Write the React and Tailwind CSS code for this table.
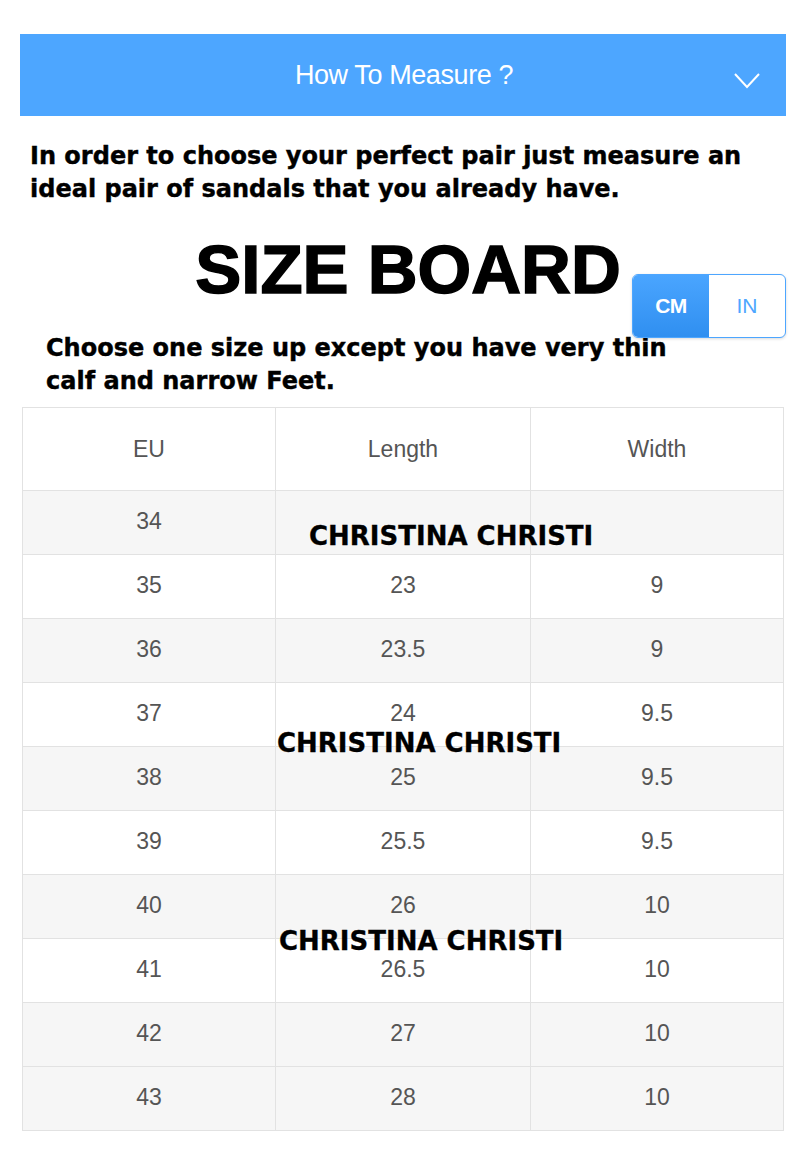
import React, { useState } from 'react';

const rows = [
  { eu: '34', len: '', w: '' },
  { eu: '35', len: '23', w: '9' },
  { eu: '36', len: '23.5', w: '9' },
  { eu: '37', len: '24', w: '9.5' },
  { eu: '38', len: '25', w: '9.5' },
  { eu: '39', len: '25.5', w: '9.5' },
  { eu: '40', len: '26', w: '10' },
  { eu: '41', len: '26.5', w: '10' },
  { eu: '42', len: '27', w: '10' },
  { eu: '43', len: '28', w: '10' },
];

const heavy = "font-['DejaVu_Sans',sans-serif] font-bold text-black [-webkit-text-stroke:0.4px_black]";
const cellFont = "font-['Liberation_Sans',Arial,sans-serif] text-[#555] text-[23px]";

function Watermark({ className }) {
  return (
    <div className={"absolute leading-none whitespace-nowrap font-['DejaVu_Sans',sans-serif] font-bold text-[26px] text-black [-webkit-text-stroke:0.3px_black] " + className}>
      CHRISTINA CHRISTI
    </div>
  );
}

export default function App() {
  const [unit, setUnit] = useState('cm');
  return (
    <div className="w-[800px] min-h-[1156px] bg-white pt-[34px]">
      <div className="ml-[20px] w-[766px]">
        <div className="h-[82px] bg-[#4da6ff] flex items-center relative">
          <div className="flex-1 text-center text-white text-[27px] font-['Liberation_Sans',Arial,sans-serif] tracking-[-0.4px] pl-[2px]">
            How To Measure ?
          </div>
          <svg className="absolute right-[26px] top-[39px]" width="26" height="16" viewBox="0 0 26 16" fill="none">
            <polyline points="1,1 13,14 25,1" stroke="white" strokeWidth="2" />
          </svg>
        </div>

        <p className={heavy + " text-[24px] leading-[33px] mt-[24px] ml-[10px] whitespace-nowrap"}>
          In order to choose your perfect pair just measure an<br />ideal pair of sandals that you already have.
        </p>

        <div className="relative mt-[29px]">
          <h1 className="text-center text-[69px] leading-none font-['Liberation_Sans',Arial,sans-serif] font-bold text-black [-webkit-text-stroke:1.5px_black] pl-[10px]">
            SIZE BOARD
          </h1>
          <div className="absolute right-0 top-[39px] w-[154px] h-[64px] flex rounded-[6px] border-[1.5px] border-[#4da6ff] overflow-hidden shadow-[0_1px_3px_rgba(0,0,0,0.15)] bg-white">
            <button
              onClick={() => setUnit('cm')}
              className={"w-[76px] h-full flex items-center justify-center font-['Liberation_Sans',Arial,sans-serif] text-[21px] font-bold tracking-[-0.5px] " + (unit === 'cm' ? 'bg-gradient-to-b from-[#4aa5ff] to-[#2f8ff0] text-white' : 'text-[#4da6ff]')}
            >
              CM
            </button>
            <button
              onClick={() => setUnit('in')}
              className={"flex-1 h-full flex items-center justify-center font-['Liberation_Sans',Arial,sans-serif] text-[21px] " + (unit === 'in' ? 'bg-gradient-to-b from-[#4aa5ff] to-[#2f8ff0] text-white font-bold' : 'text-[#4da6ff]')}
            >
              IN
            </button>
          </div>
          <p className={heavy + " text-[24px] leading-[33px] mt-[28px] ml-[26px] whitespace-nowrap"}>
            Choose one size up except you have very thin<br />calf and narrow Feet.
          </p>
        </div>

        <div className="relative mt-[9px] mx-[2px] border border-[#e2e2e2]">
          <div className="grid grid-cols-[253px_255px_1fr] h-[83px] bg-white border-b border-[#e2e2e2]">
            <div className={cellFont + " flex items-center justify-center border-r border-[#e2e2e2]"}>EU</div>
            <div className={cellFont + " flex items-center justify-center border-r border-[#e2e2e2]"}>Length</div>
            <div className={cellFont + " flex items-center justify-center"}>Width</div>
          </div>
          {rows.map((r, i) => (
            <div
              key={r.eu}
              className={"grid grid-cols-[253px_255px_1fr] " + (i === rows.length - 1 ? 'h-[63px] ' : 'h-[64px] border-b border-[#e2e2e2] ') + (i % 2 === 0 || i === 9 ? 'bg-[#f6f6f6]' : 'bg-white')}
            >
              <div className={cellFont + " flex items-center justify-center border-r border-[#e2e2e2] pb-[3px]"}>{r.eu}</div>
              <div className={cellFont + " flex items-center justify-center border-r border-[#e2e2e2] pb-[3px]"}>{r.len}</div>
              <div className={cellFont + " flex items-center justify-center pb-[3px]"}>{r.w}</div>
            </div>
          ))}
          <Watermark className="top-[115px] left-[286px]" />
          <Watermark className="top-[322px] left-[254px]" />
          <Watermark className="top-[520px] left-[256px]" />
        </div>
      </div>
    </div>
  );
}
